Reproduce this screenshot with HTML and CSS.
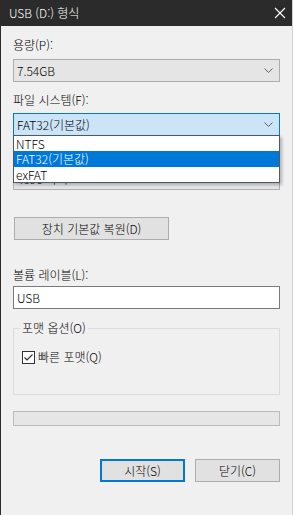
FILE: index.html
```html
<!DOCTYPE html>
<html lang="ko">
<head>
    <meta charset="UTF-8">
    <meta name="viewport" content="width=device-width, initial-scale=1.0">
    <title>USB (D:) 형식</title>
    <link rel="stylesheet" href="styles.css">
</head>
<body>
    <div class="window">
        <div class="titlebar">
            <span class="title">USB (D:) 형식</span>
            <svg class="close" width="12" height="12" viewBox="0 0 12 12">
                <path d="M1 1 L11 11 M11 1 L1 11" stroke="#fff" stroke-width="1.1" fill="none"/>
            </svg>
        </div>

        <div class="content">
            <div class="field-label">용량(P):</div>
            <div class="combo">
                <span>7.54GB</span>
                <svg class="chevron" width="9" height="5" viewBox="0 0 9 5">
                    <path d="M0.5 0.5 L4.5 4.5 L8.5 0.5" stroke="#606060" fill="none"/>
                </svg>
            </div>

            <div class="field-label gap-label">파일 시스템(F):</div>
            <div class="combo-wrap">
                <div class="combo combo-open">
                    <span>FAT32(기본값)</span>
                    <svg class="chevron" width="9" height="5" viewBox="0 0 9 5">
                        <path d="M0.5 0.5 L4.5 4.5 L8.5 0.5" stroke="#606060" fill="none"/>
                    </svg>
                </div>
                <ul class="dropdown">
                    <li>NTFS</li>
                    <li class="selected">FAT32(기본값)</li>
                    <li>exFAT</li>
                </ul>
            </div>

            <!-- covered by the open list, as in the real dialog -->
            <div class="field-label gap-label covered">할당 단위 크기(A):</div>
            <div class="combo">
                <span>4096 바이트</span>
                <svg class="chevron" width="9" height="5" viewBox="0 0 9 5">
                    <path d="M0.5 0.5 L4.5 4.5 L8.5 0.5" stroke="#606060" fill="none"/>
                </svg>
            </div>

            <button class="btn btn-restore">장치 기본값 복원(D)</button>

            <div class="field-label volume-label">볼륨 레이블(L):</div>
            <input class="text-input" type="text" value="USB">

            <fieldset class="group">
                <legend>포맷 옵션(O)</legend>
                <label class="check-row">
                    <svg class="checkbox" width="13" height="13" viewBox="0 0 13 13">
                        <rect x="0.5" y="0.5" width="12" height="12" fill="#fff" stroke="#333"/>
                        <path d="M2.5 6.5 L5 9 L10.5 3.5" stroke="#333" stroke-width="1.2" fill="none"/>
                    </svg>
                    <span>빠른 포맷(Q)</span>
                </label>
            </fieldset>

            <div class="progress"></div>

            <div class="actions">
                <button class="btn btn-default">시작(S)</button>
                <button class="btn">닫기(C)</button>
            </div>
        </div>
    </div>
</body>
</html>
```

FILE: styles.css
```css
body {
    margin: 0;
    font-family: "Noto Sans CJK KR", "Noto Sans", sans-serif;
    font-size: 12px;
    font-weight: 300;
    color: #000;
    background: #f0f0f0;
}
.window {
    height: 515px;
    box-sizing: border-box;
    border-left: 1px solid #2b2b2b;
    border-right: 1px solid #d0d0d0;
    background: #f0f0f0;
}
.titlebar {
    height: 26px;
    background: #2b2b2b;
    color: #fff;
    display: flex;
    align-items: center;
    justify-content: space-between;
    padding: 0 6px 0 9px;
    margin-left: -1px;
}
.title {
    font-size: 12px;
    line-height: 16px;
}
.close {
    display: block;
}
.content {
    display: flex;
    flex-direction: column;
    padding: 11px 12px 0 12px;
}
.field-label {
    height: 16px;
    line-height: 16px;
}
.gap-label {
    margin-top: 10px;
}
.covered {
    visibility: hidden;
}
.combo {
    height: 23px;
    box-sizing: border-box;
    border: 1px solid #adadad;
    background: #e5e5e5;
    display: flex;
    align-items: center;
    justify-content: space-between;
    padding: 0 6px 0 3px;
    line-height: 16px;
}
.field-label + .combo {
    margin-top: 6px;
}
.gap-label + .combo,
.gap-label + .combo-wrap {
    margin-top: 5px;
}
.combo-open {
    background: #cce4f7;
    border-color: #0078d7;
}
.combo-wrap {
    position: relative;
    height: 23px;
}
.dropdown {
    position: absolute;
    top: 22px;
    left: 0;
    right: 0;
    margin: 0;
    padding: 0;
    list-style: none;
    background: #fff;
    border: 1px solid #4d5a66;
    box-shadow: 2px 2px 3px rgba(0, 0, 0, 0.25);
    z-index: 2;
}
.dropdown li {
    height: 15px;
    line-height: 15px;
    padding-left: 2px;
}
.dropdown li:nth-child(2) {
    height: 16px;
    line-height: 16px;
}
.dropdown .selected {
    background: #0078d7;
    color: #fff;
}
.btn {
    font-family: inherit;
    font-size: 12px;
    font-weight: inherit;
    color: #000;
    height: 23px;
    box-sizing: border-box;
    background: #e1e1e1;
    border: 1px solid #adadad;
    padding: 0;
    line-height: 16px;
}
.btn-restore {
    margin-top: 27px;
    margin-left: 1px;
    width: 155px;
    align-self: flex-start;
}
.volume-label {
    margin-top: 27px;
}
.text-input {
    margin: 3px 0 0;
    height: 23px;
    box-sizing: border-box;
    border: 1px solid #7a7a7a;
    background: #fff;
    font-family: inherit;
    font-size: 12px;
    font-weight: inherit;
    padding: 0 3px;
    outline: none;
}
.group {
    margin: 11px 0 0;
    padding: 13px 8px 29px;
    border: 1px solid #dcdcdc;
    min-width: 0;
}
.group legend {
    padding: 0 2px;
    margin-left: -2px;
    line-height: 16px;
    height: 16px;
}
.check-row {
    display: flex;
    align-items: center;
    gap: 3px;
    height: 16px;
    line-height: 16px;
}
.checkbox {
    display: block;
}
.progress {
    margin-top: 16px;
    height: 15px;
    box-sizing: border-box;
    border: 1px solid #bcbcbc;
    background: #e6e6e6;
}
.actions {
    margin-top: 33px;
    display: flex;
    justify-content: flex-end;
    gap: 10px;
}
.actions .btn {
    width: 85px;
}
.btn-default {
    border: 2px solid #0078d7;
}
```
